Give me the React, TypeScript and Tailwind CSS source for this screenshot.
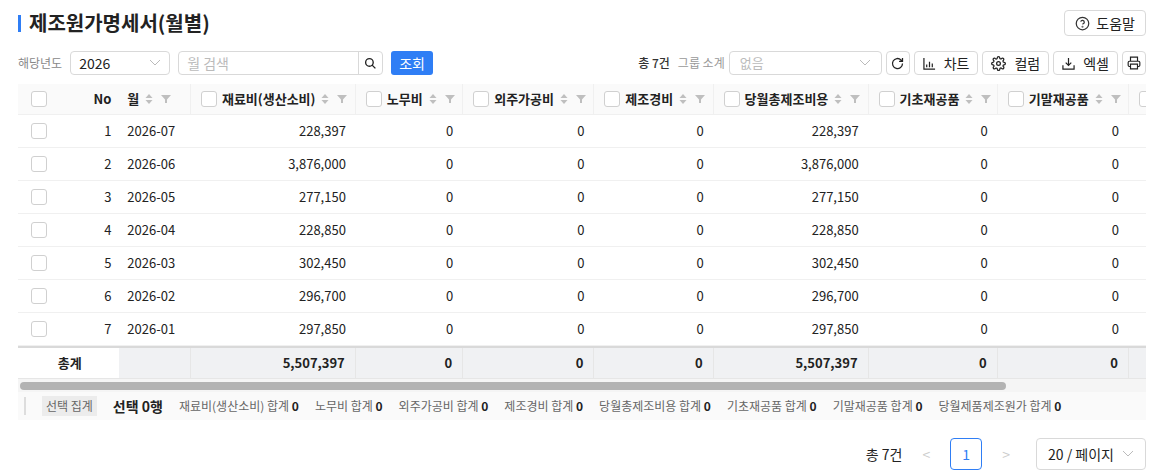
import React from "react";

const F = { fontFamily: '"Noto Sans CJK KR", "Noto Sans", sans-serif' };

const cols = [
  { k: "재료비(생산소비)", w: 166 },
  { k: "노무비", w: 108 },
  { k: "외주가공비", w: 132 },
  { k: "제조경비", w: 120 },
  { k: "당월총제조비용", w: 156 },
  { k: "기초재공품", w: 130 },
  { k: "기말재공품", w: 132 },
  { k: "당월제품제조원가", w: 150 },
];

const rows: [number, string, string, string][] = [
  [1, "2026-07", "228,397", "228,397"],
  [2, "2026-06", "3,876,000", "3,876,000"],
  [3, "2026-05", "277,150", "277,150"],
  [4, "2026-04", "228,850", "228,850"],
  [5, "2026-03", "302,450", "302,450"],
  [6, "2026-02", "296,700", "296,700"],
  [7, "2026-01", "297,850", "297,850"],
];

const Box = () => <span className="inline-block w-[16px] h-[16px] rounded-[3px] border border-[#d0d0d0] bg-white shrink-0" />;

const SortF = () => (
  <span className="flex items-center gap-[8px] ml-[6px] shrink-0">
    <svg width="8" height="12" viewBox="0 0 8 12"><path d="M4 1 L7.5 5 H0.5Z" fill="#bfbfbf" /><path d="M4 11 L7.5 7 H0.5Z" fill="#bfbfbf" /></svg>
    <svg width="10" height="10" viewBox="0 0 10 10"><path d="M0 1 H10 L6 5.5 V9 H4 V5.5Z" fill="#bfbfbf" /></svg>
  </span>
);

export default function App() {
  return (
    <div style={F} className="w-[1164px] h-[470px] bg-white text-[#222] overflow-hidden">
      <div className="flex items-center justify-between pl-[18px] pr-[18px] pt-[10px] h-[36px]">
        <div className="flex items-center gap-[8px]">
          <span className="w-[3px] h-[17px] bg-[#2f7ef5]" />
          <span className="text-[20px] font-bold text-[#222]">제조원가명세서(월별)</span>
        </div>
        <button className="flex items-center gap-[6px] h-[26px] px-[10px] border border-[#d9d9d9] rounded-[4px] text-[14px]">
          <svg width="15" height="15" viewBox="0 0 24 24" fill="none" stroke="#333" strokeWidth="2"><circle cx="12" cy="12" r="10"/><path d="M9.1 9a3 3 0 0 1 5.8 1c0 2-3 3-3 3"/><circle cx="12" cy="17" r="0.5"/></svg>
          도움말
        </button>
      </div>
      <div className="flex items-center justify-between pl-[18px] pr-[18px] mt-[14px] h-[26px]">
        <div className="flex items-center">
          <span className="text-[12px] text-[#888] mr-[8px]">해당년도</span>
          <div className="w-[100px] h-[24px] border border-[#d9d9d9] rounded-[4px] flex items-center justify-between px-[8px] text-[14px]">
            2026
            <svg width="12" height="8" viewBox="0 0 12 8"><path d="M1 1 L6 6 L11 1" fill="none" stroke="#bbb" /></svg>
          </div>
          <div className="ml-[8px] w-[205px] h-[24px] border border-[#d9d9d9] rounded-[4px] flex">
            <span className="flex-1 px-[8px] text-[14px] text-[#bbb] leading-[22px]">월 검색</span>
            <span className="w-[24px] border-l border-[#d9d9d9] flex items-center justify-center">
              <svg width="13" height="13" viewBox="0 0 24 24" fill="none" stroke="#222" strokeWidth="2.5"><circle cx="10" cy="10" r="7"/><path d="M15 15 L21 21"/></svg>
            </span>
          </div>
          <button className="ml-[8px] h-[24px] px-[8px] bg-[#2f7ef5] text-white rounded-[3px] text-[14px]">조회</button>
        </div>
        <div className="flex items-center gap-[4px]">
          <span className="text-[12px] font-medium text-[#333]">총 7건</span>
          <span className="text-[12px] text-[#999] ml-[4px]">그룹 소계</span>
          <div className="w-[153px] h-[24px] border border-[#d9d9d9] rounded-[4px] flex items-center justify-between px-[10px] text-[13px] text-[#bbb]">
            없음
            <svg width="12" height="8" viewBox="0 0 12 8"><path d="M1 1 L6 6 L11 1" fill="none" stroke="#bbb" /></svg>
          </div>
          <button className="w-[24px] h-[24px] border border-[#d9d9d9] rounded-[4px] flex items-center justify-center">
            <svg width="15" height="15" viewBox="0 0 24 24" fill="none" stroke="#222" strokeWidth="2"><path d="M20 12a8 8 0 1 1-2.4-5.7L20 8.5M20 3v5.5h-5.5"/></svg>
          </button>
          <button className="h-[24px] px-[8px] border border-[#d9d9d9] rounded-[4px] flex items-center gap-[8px] text-[14px]">
            <svg width="13" height="13" viewBox="0 0 14 14" fill="none" stroke="#222" strokeWidth="1.3"><path d="M1 1 V13 H13 M4 11 V8 M7 11 V5 M10 11 V7"/></svg>
            차트
          </button>
          <button className="h-[24px] px-[8px] border border-[#d9d9d9] rounded-[4px] flex items-center gap-[8px] text-[14px]">
            <svg width="15" height="15" viewBox="0 0 24 24" fill="none" stroke="#222" strokeWidth="2"><circle cx="12" cy="12" r="3"/><path d="M19.4 15a1.7 1.7 0 0 0 .3 1.8l.1.1a2 2 0 1 1-2.8 2.8l-.1-.1a1.7 1.7 0 0 0-1.8-.3 1.7 1.7 0 0 0-1 1.5V21a2 2 0 1 1-4 0v-.1a1.7 1.7 0 0 0-1.1-1.5 1.7 1.7 0 0 0-1.8.3l-.1.1a2 2 0 1 1-2.8-2.8l.1-.1a1.7 1.7 0 0 0 .3-1.8 1.7 1.7 0 0 0-1.5-1H3a2 2 0 1 1 0-4h.1a1.7 1.7 0 0 0 1.5-1.1 1.7 1.7 0 0 0-.3-1.8l-.1-.1a2 2 0 1 1 2.8-2.8l.1.1a1.7 1.7 0 0 0 1.8.3H9a1.7 1.7 0 0 0 1-1.5V3a2 2 0 1 1 4 0v.1a1.7 1.7 0 0 0 1 1.5 1.7 1.7 0 0 0 1.8-.3l.1-.1a2 2 0 1 1 2.8 2.8l-.1.1a1.7 1.7 0 0 0-.3 1.8V9a1.7 1.7 0 0 0 1.5 1H21a2 2 0 1 1 0 4h-.1a1.7 1.7 0 0 0-1.5 1z"/></svg>
            컬럼
          </button>
          <button className="h-[24px] px-[8px] border border-[#d9d9d9] rounded-[4px] flex items-center gap-[8px] text-[14px]">
            <svg width="13" height="13" viewBox="0 0 14 14" fill="none" stroke="#222" strokeWidth="1.3"><path d="M7 1 V9 M4 6 L7 9 L10 6 M1 9 V13 H13 V9"/></svg>
            엑셀
          </button>
          <button className="w-[24px] h-[24px] border border-[#d9d9d9] rounded-[4px] flex items-center justify-center">
            <svg width="14" height="14" viewBox="0 0 24 24" fill="none" stroke="#222" strokeWidth="2"><path d="M6 9V2h12v7M6 18H4a2 2 0 0 1-2-2v-5a2 2 0 0 1 2-2h16a2 2 0 0 1 2 2v5a2 2 0 0 1-2 2h-2M6 14h12v8H6z"/></svg>
          </button>
        </div>
      </div>

      <div className="mx-[18px] mt-[8px] overflow-hidden w-[1128px]">
        <div className="w-[1260px]">
          <div className="flex h-[31px] bg-[#fafafa] border-b border-[#f0f0f0] text-[13px] font-semibold">
            <div className="w-[40px] flex items-center justify-center pl-[2px]"><Box /></div>
            <div className="w-[62px] flex items-center justify-end pr-[8px]">No</div>
            <div className="w-[72px] flex items-center pl-[8px] border-r border-[#f0f0f0]">월<SortF /></div>
            {cols.map((c) => (
              <div key={c.k} style={{ width: c.w }} className="flex items-center pl-[10px] border-r border-[#f0f0f0]">
                <Box /><span className="ml-[5px]">{c.k}</span><SortF />
              </div>
            ))}
          </div>
          {rows.map(([n, m, a, t]) => (
            <div key={n} className="flex h-[33px] border-b border-[#f0f0f0] text-[13px]">
              <div className="w-[40px] flex items-center justify-center pl-[2px]"><Box /></div>
              <div className="w-[62px] flex items-center justify-end pr-[8px]">{n}</div>
              <div className="w-[72px] flex items-center pl-[8px]">{m}</div>
              {cols.map((c, i) => (
                <div key={c.k} style={{ width: c.w }} className="flex items-center justify-end pr-[10px]">
                  {i === 0 ? a : i === 4 ? t : "0"}
                </div>
              ))}
            </div>
          ))}
          <div className="flex h-[32px] border-t-2 border-[#d9d9d9] bg-[#f0f1f3] text-[13px] font-bold">
            <div className="w-[102px] flex items-center justify-center bg-white pl-[2px]">총계</div>
            <div className="w-[72px] border-r border-[#e6e6e6]" />
            {cols.map((c, i) => (
              <div key={c.k} style={{ width: c.w }} className="flex items-center justify-end pr-[10px] border-r border-[#e6e6e6]">
                {i === 0 || i === 4 ? "5,507,397" : "0"}
              </div>
            ))}
          </div>
        </div>
        <div className="h-[14px] bg-[#f5f5f5] flex items-center px-[2px] border-t border-[#e6e6e6]">
          <div className="h-[8px] w-[986px] rounded-full bg-[#b3b3b3]" />
        </div>
        <div className="h-[28px] bg-[#fafafa] flex items-center px-[6px] text-[12px] text-[#666]">
          <span className="w-[2px] h-[18px] bg-[#ddd] mr-[16px]" />
          <span className="bg-[#ececec] px-[4px] py-[1px] mr-[16px]">선택 집계</span>
          <span className="text-[14px] font-bold text-[#222] mr-[16px]">선택 0행</span>
          {["재료비(생산소비)", "노무비", "외주가공비", "제조경비", "당월총제조비용", "기초재공품", "기말재공품", "당월제품제조원가"].map((k) => (
            <span key={k} className="mr-[16px]">{k} 합계 <b className="text-[#222]">0</b></span>
          ))}
        </div>
      </div>

      <div className="flex items-center justify-end pr-[18px] mt-[18px] text-[14px]">
        <span className="mr-[20px]">총 7건</span>
        <span className="text-[#ccc] mr-[20px]">&lt;</span>
        <span className="w-[32px] h-[32px] border border-[#2f7ef5] text-[#2f7ef5] rounded-[4px] flex items-center justify-center">1</span>
        <span className="text-[#ccc] ml-[20px] mr-[26px]">&gt;</span>
        <div className="w-[110px] h-[32px] border border-[#d9d9d9] rounded-[4px] flex items-center justify-between px-[11px]">
          20 / 페이지
          <svg width="12" height="8" viewBox="0 0 12 8"><path d="M1 1 L6 6 L11 1" fill="none" stroke="#bbb" /></svg>
        </div>
      </div>
    </div>
  );
}
